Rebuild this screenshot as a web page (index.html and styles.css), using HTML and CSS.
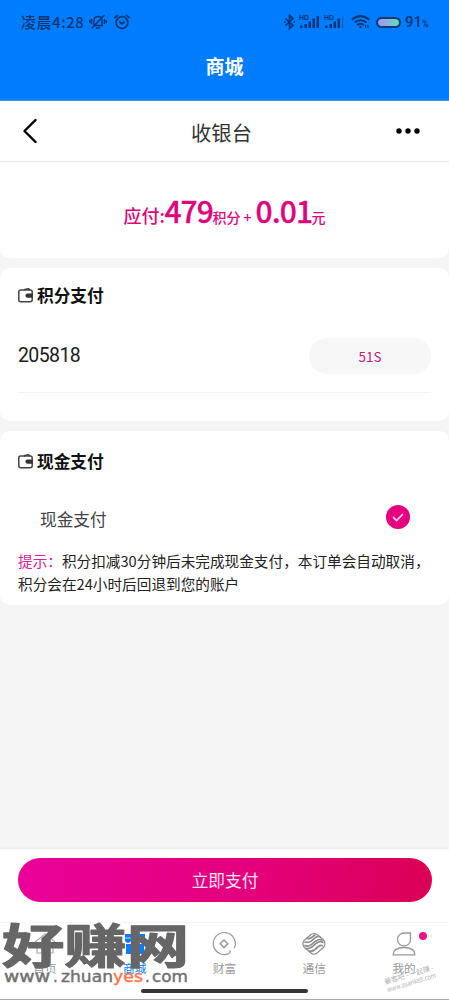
FILE: index.html
```html
<!DOCTYPE html>
<html lang="zh-CN">
<head>
<meta charset="utf-8">
<title>收银台</title>
<link rel="stylesheet" href="styles.css">
</head>
<body>
<div class="screen">
  <header class="top">
    <div class="status">
      <div class="status-left">
        <span class="clock">凌晨4:28</span>
        <svg class="mute" width="18" height="16" viewBox="0 0 18 16" fill="none" stroke="currentColor" stroke-width="1.5" stroke-linecap="round"><path d="M4.5 11.5h9M5 11V6.500q0-4 4-4t4 4V11M7.500 14h3M15 1.500L3 14M2.500 5.500v4M15.500 5.500v4M.7 6.500v2M17.300 6.500v2"/></svg>
        <svg class="alarm" width="16" height="16" viewBox="0 0 16 16" fill="none" stroke="currentColor" stroke-width="1.7" stroke-linecap="round"><circle cx="8" cy="8.600" r="5.900"/><path d="M5.800 8l2.200 1.800L10.200 8M.9 3.500l2.600-2.200M15.100 3.500l-2.600-2.200"/></svg>
      </div>
      <div class="status-right">
        <svg class="bt" width="11" height="16" viewBox="0 0 11 16" fill="none" stroke="currentColor" stroke-width="1.700"><path d="M1.500 4.500l7.500 7-3.500 3v-13L9 4.500l-7.500 7"/><path d="M0 8h1.600M9.400 8H11"/></svg>
        <svg class="signal" width="21" height="16" viewBox="0 0 21 16" fill="currentColor"><text x="0" y="5.500" class="hd">HD</text><rect x="1" y="11.500" width="2.500" height="2.500"/><rect x="5.500" y="10" width="2.500" height="4"/><rect x="9.500" y="7.500" width="2.500" height="6.500"/><rect x="13.500" y="4.500" width="2.500" height="9.500"/><rect x="17.500" y="2" width="2.500" height="12"/></svg>
        <svg class="signal second" width="21" height="16" viewBox="0 0 21 16" fill="currentColor"><text x="0" y="5.500" class="hd">HD</text><rect x="1" y="11.500" width="2.500" height="2.500"/><rect x="5.500" y="10" width="2.500" height="4"/><rect x="9.500" y="7.500" width="2.500" height="6.500"/><rect x="13.500" y="4.500" width="2.500" height="9.500"/><rect x="17.800" y="2" width="1.500" height="12" opacity=".35"/></svg>
        <svg class="wifi" width="19" height="16" viewBox="0 0 19 16" fill="none" stroke="currentColor" stroke-width="2"><path d="M.8 5.800Q9.500-1.600 18.200 5.800M3.500 8.500q6-4.600 12 0M6 11q3.500-2.600 7 0"/><circle cx="9.500" cy="13" r="1.200" fill="currentColor" stroke="none"/><path stroke-width="1.200" d="M14.600 11v3M17 11v3"/></svg>
        <span class="battery"></span>
        <span class="percent">91<small>%</small></span>
      </div>
    </div>
    <h1 class="mall">商城</h1>
  </header>

  <nav class="titlebar">
    <svg width="15" height="26" viewBox="0 0 15 26" fill="none" stroke="#000" stroke-width="2.400" stroke-linecap="round" stroke-linejoin="round"><path d="M13.500 2L2.500 13l11 11"/></svg>
    <span class="title">收银台</span>
    <svg width="24" height="6" viewBox="0 0 24 6"><circle cx="3" cy="3" r="2.700"/><circle cx="12" cy="3" r="2.700"/><circle cx="21" cy="3" r="2.700"/></svg>
  </nav>

  <main class="main">
    <section class="card amount">
      <span class="due">应付:</span><span class="big points">479</span><span class="unit">积分 +</span><span class="big cash">0.01</span><span class="unit">元</span>
    </section>

    <section class="card score">
      <h2 class="heading"><svg width="15" height="15" viewBox="0 0 15 15" fill="none" stroke="#444" stroke-width="1.500"><rect x=".8" y="2" width="13.400" height="11.700" rx="2"/><path d="M6 1.800L10.500.6l1.500 1.500"/><path d="M14.500 5.500H9.500a2 2 0 0 0 0 4.200h5z" fill="#333" stroke="none"/></svg>积分支付</h2>
      <div class="phone-row"><span class="number">205818</span><span class="countdown">51S</span></div>
    </section>

    <section class="card money">
      <h2 class="heading"><svg width="15" height="15" viewBox="0 0 15 15" fill="none" stroke="#444" stroke-width="1.500"><rect x=".8" y="2" width="13.400" height="11.700" rx="2"/><path d="M6 1.800L10.500.6l1.500 1.500"/><path d="M14.500 5.500H9.500a2 2 0 0 0 0 4.200h5z" fill="#333" stroke="none"/></svg>现金支付</h2>
      <div class="method"><span class="method-name">现金支付</span><svg width="24" height="24" viewBox="0 0 24 24"><circle cx="12" cy="12" r="12" fill="#e4007f"/><path d="M7.500 12.500l3 3 6-6" fill="none" stroke="#ffd9f0" stroke-width="1.700" stroke-linecap="round"/></svg></div>
      <p class="tip"><span class="pink">提示：</span>积分扣减30分钟后未完成现金支付，本订单会自动取消，<br>积分会在24小时后回退到您的账户</p>
    </section>
  </main>

  <div class="paybar"><button class="pay">立即支付</button></div>

  <footer class="tabs">
    <div class="tab"><svg width="24" height="24" viewBox="0 0 24 24" fill="none" stroke="#aaa" stroke-width="1.200"><path d="M2 10L12 2l10 8M4 10v11h5v-6q3-3 6 0v6h5V10"/></svg><span>首页</span></div>
    <div class="tab active"><svg width="24" height="24" viewBox="0 0 24 24"><path d="M2 2h20v7q-3 4-6 0-4 4-8 0-3 4-6 0zM3 12h18v10H3z" fill="#087dff"/><path d="M8 15q4 5 8 0M2 6h20" fill="none" stroke="#b8dcff" stroke-width="1.200"/></svg><span>商城</span></div>
    <div class="tab"><svg width="24" height="24" viewBox="0 0 24 24" fill="none" stroke="#999" stroke-width="1.200"><path d="M18.200 20.800a11 11 0 1 1 4-4.500M18 18.300v2.700"/><path d="M12 8l3.800 3.800-3.800 3.800-3.800-3.800z" stroke-width="1.500"/></svg><span>财富</span></div>
    <div class="tab"><svg width="24" height="24" viewBox="0 0 24 24" fill="none" stroke="#8d8d8d" stroke-linecap="round" stroke-linejoin="round"><path d="M2 8.500l7-6q3-2 6 0l6.500 5.500q2.500 3 .5 7l-7 6q-3 2.500-6 0L2.500 15.500Q-.5 12 2 8.500z" stroke-width="1.200"/><path d="M5 6.500q2.500.6 4.500-1L13 3M3 10q3.500 1.200 6.500-1.200l3.500-3q2.500-2 5-1M3 13.500q3.500 1.500 7-1.300l3.500-3q3.500-2.600 6.500-1.200M4 16.500q3.500.6 7-2.300l3.500-3q3.500-2.600 6.500-.9M7.500 19q3 .8 5.500-1.500l3.500-3q2-1.500 4-.8" stroke-width="1.700"/></svg><span>通信</span></div>
    <div class="tab"><svg width="24" height="24" viewBox="0 0 24 24" fill="none" stroke="#999" stroke-width="1.300"><path d="M12 1h6.500v6.500A6.500 6.500 0 1 1 12 1z"/><path d="M1.200 22.800q0-7.300 10.800-7.300t10.800 7.300z"/></svg><span>我的</span><i class="dot"></i></div>
    <div class="home-indicator"></div>
    <svg class="logo" width="190" height="78" viewBox="0 0 190 78">
      <text class="logo-cn" x="2" y="39.500" textLength="187" lengthAdjust="spacingAndGlyphs">好赚网</text>
      <text class="logo-url" x="4" y="58.500" textLength="46" lengthAdjust="spacingAndGlyphs">www</text>
      <text class="logo-url" x="53" y="58.500">.</text>
      <text class="logo-url" x="61" y="58.500" textLength="52" lengthAdjust="spacingAndGlyphs">zhuan</text>
      <text class="logo-url orange" x="113" y="58.500" textLength="30" lengthAdjust="spacingAndGlyphs">yes</text>
      <text class="logo-url" x="145" y="58.500">.</text>
      <text class="logo-url" x="152" y="58.500" textLength="36" lengthAdjust="spacingAndGlyphs">com</text>
    </svg>
    <svg class="stamp" width="68" height="40" viewBox="0 0 68 40"><g transform="rotate(-17 10 30)"><text x="5" y="27" textLength="51" lengthAdjust="spacingAndGlyphs">最客吧 - 一起赚 -</text><text x="5" y="35" textLength="51" lengthAdjust="spacingAndGlyphs">www.zuanke8.com</text></g></svg>
  </footer>
</div>
</body>
</html>
```
FILE: styles.css
```css
* { box-sizing: border-box; }
body { margin: 0; font-family: "Noto Sans CJK SC", sans-serif; background: #f5f5f5; color: #222; }
svg { display: block; flex: none; }
.screen { width: 449px; height: 1000px; display: flex; flex-direction: column; overflow: hidden; }

.top { height: 101px; background: #007dff; border-bottom: 1px solid #4b96e4; flex: none; }
.status { height: 44px; padding: 0 19px 0 21px; display: flex; justify-content: space-between; align-items: center; color: #073575; }
.status-left, .status-right { display: flex; align-items: center; }
.clock { font-size: 15px; font-weight: 500; letter-spacing: .55px; line-height: 20px; width: 68px; white-space: nowrap; }
.alarm { margin-left: 7px; }
.bt { margin-right: 4px; }
.hd { font: bold 7px "Liberation Sans", sans-serif; }
.second { margin-left: 4px; }
.wifi { margin-left: 6px; }
.battery { width: 25px; height: 11px; margin-left: 6px; border: 2px solid #103b78; border-radius: 6px; background: linear-gradient(90deg, #a895f4, #83b8dc 55%, #62e5a9) padding-box; }
.percent { width: 25px; margin-left: 4px; font: 500 15px/20px Roboto, sans-serif; white-space: nowrap; padding-top: 2px; }
.percent small { font-size: 9px; font-weight: 700; }
.mall { margin: 8px 0 0; font-size: 19px; line-height: 28px; font-weight: 700; color: #fff; text-align: center; }

.titlebar { height: 61px; flex: none; padding: 0 29px 0 22px; background: #fff; border-bottom: 1px solid #e9e9e9; display: grid; grid-template-columns: 24px 1fr 24px; align-items: center; }
.title { font-size: 20.300px; line-height: 30px; color: #333; padding: 2px 0 0 1px; text-align: center; }

.main { flex: 1; display: flex; flex-direction: column; gap: 10px; }
.card { background: #fff; border-radius: 10px; padding: 0 18px; }
.amount { height: 96px; border-radius: 0 0 10px 10px; padding-top: 28px; display: flex; justify-content: center; align-items: baseline; color: #dc057b; white-space: nowrap; line-height: 40px; font-weight: 500; }
.due { font-size: 18px; width: 41px; }
.big { font-size: 30px; letter-spacing: -.9px; font-weight: 500; -webkit-text-stroke: .3px #dc057b; }
.points { width: 48px; }
.unit { font-size: 14px; }
.cash { margin-left: 4px; width: 56px; }

.heading { margin: 0; display: flex; align-items: center; gap: 4px; font-size: 16.700px; line-height: 22px; color: #111; font-weight: 700; }
.score { height: 153px; padding-top: 16px; }
.phone-row { margin-top: 13px; height: 74px; border-bottom: 1px solid #f2f2f2; display: flex; align-items: center; justify-content: space-between; }
.number { font: 19.500px/24px Roboto, sans-serif; letter-spacing: -.6px; color: #1b1b1b; padding-top: 1px; }
.countdown { width: 122px; height: 36px; border-radius: 18px; background: #f7f7f7; color: #b5257e; font-size: 13.500px; line-height: 36px; text-align: center; }
.money { height: 174px; padding-top: 19px; }
.method { height: 24px; margin-top: 33px; padding: 0 21px 0 22px; display: flex; align-items: center; justify-content: space-between; font-size: 16.700px; color: #444; line-height: 24px; }
.method-name { padding-top: 3px; }
.tip { margin: 20px 0 0; font-size: 14.650px; line-height: 23px; white-space: nowrap; color: #222; }
.pink { color: #d62398; }

.paybar { height: 73px; flex: none; padding: 9px 17px 0 18px; background: #fff; box-shadow: 0 -1px 4px rgba(0, 0, 0, .06); }
.pay { display: block; width: 100%; height: 44px; padding: 1px 0 0; border: 0; border-radius: 22px; background: linear-gradient(100deg, #ea009a, #e4007c 55%, #db0055); color: #ffe4f5; font: 16.700px/43px "Noto Sans CJK SC", sans-serif; }

.tabs { position: relative; height: 78px; flex: none; background: #fff; border-top: 1px solid #f5f5f5; border-bottom: 1px solid #aaa; display: grid; grid-template-columns: repeat(5, 1fr); }
.tab { position: relative; display: flex; flex-direction: column; align-items: center; gap: 3px; padding-top: 9px; font-size: 11.700px; line-height: 18px; color: #999; }
.active { color: #087dff; }
.dot { position: absolute; left: 60px; top: 9px; width: 8px; height: 8px; border-radius: 50%; background: #eb1386; }
.home-indicator { position: absolute; left: 141px; top: 66px; width: 167px; height: 4px; border-radius: 2px; background: #353535; }
.logo { position: absolute; left: 0; top: 0; overflow: visible; }
.logo-cn { font: 700 46.500px "Noto Sans CJK SC", sans-serif; fill: #666; stroke: #666; stroke-width: 1.200px; stroke-linejoin: round; }
.logo-url { font: 15px "DejaVu Sans", sans-serif; fill: #707070; stroke: #707070; stroke-width: .4px; }
.logo-url.orange { fill: #ff7548; stroke: #ff7548; }
.stamp { position: absolute; left: 381px; top: 33px; overflow: visible; }
.stamp text { font: 7px "Noto Sans CJK SC", sans-serif; fill: #b3b3b3; }
```
